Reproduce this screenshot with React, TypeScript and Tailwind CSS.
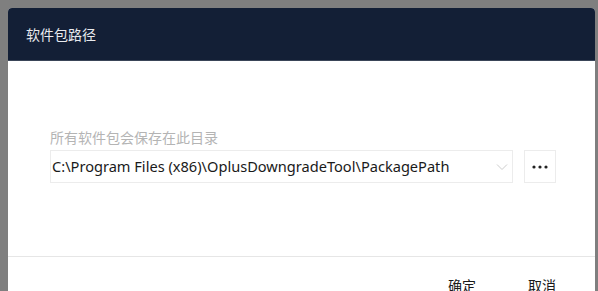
import React from "react";

export default function App() {
  return (
    <div className="w-[598px] h-[291px] bg-[#7f7f7f] pl-[8px] pr-[3px] pt-[8px] overflow-hidden" style={{ fontFamily: '"Noto Sans", "Noto Sans CJK SC", sans-serif' }}>
      <div className="w-full h-[300px] bg-white rounded-t-[4px] overflow-hidden flex flex-col">
        <div className="h-[53px] bg-[#131f36] flex items-center pl-[18px] border-b border-[#3a4558]">
          <span className="text-[14px] text-[#e8eaee]" style={{ fontFamily: '"Noto Sans CJK SC", sans-serif' }}>软件包路径</span>
        </div>
        <div className="pl-[42px] pt-[66px] h-[195px]">
          <div className="text-[14px] leading-[20px] text-[#b4b4b4]" style={{ fontFamily: '"Noto Sans CJK SC", sans-serif' }}>所有软件包会保存在此目录</div>
          <div className="flex items-center gap-[11px] mt-[3px]">
            <div className="w-[463px] h-[33px] border border-[#ececec] flex items-center justify-between pr-[4px]">
              <span className="text-[14.6px] text-[#1a1a1a] pl-[1px] whitespace-nowrap">C:\Program Files (x86)\OplusDowngradeTool\PackagePath</span>
              <svg width="12" height="8" viewBox="0 0 12 8" fill="none">
                <path d="M1 1.5 L6 6.5 L11 1.5" stroke="#cccccc" strokeWidth="1" />
              </svg>
            </div>
            <div className="w-[32px] h-[33px] border border-[#ececec] flex items-center justify-center">
              <svg width="16" height="4" viewBox="0 0 16 4">
                <circle cx="2" cy="2" r="1.6" fill="#222" />
                <circle cx="8" cy="2" r="1.6" fill="#222" />
                <circle cx="14" cy="2" r="1.6" fill="#222" />
              </svg>
            </div>
          </div>
        </div>
        <div className="border-t border-[#e6e6e6] flex justify-end pt-[18px] pr-[39px] gap-[52px] text-[14px] text-[#1a1a1a]" style={{ fontFamily: '"Noto Sans CJK SC", sans-serif' }}>
          <span>确定</span>
          <span>取消</span>
        </div>
      </div>
    </div>
  );
}
